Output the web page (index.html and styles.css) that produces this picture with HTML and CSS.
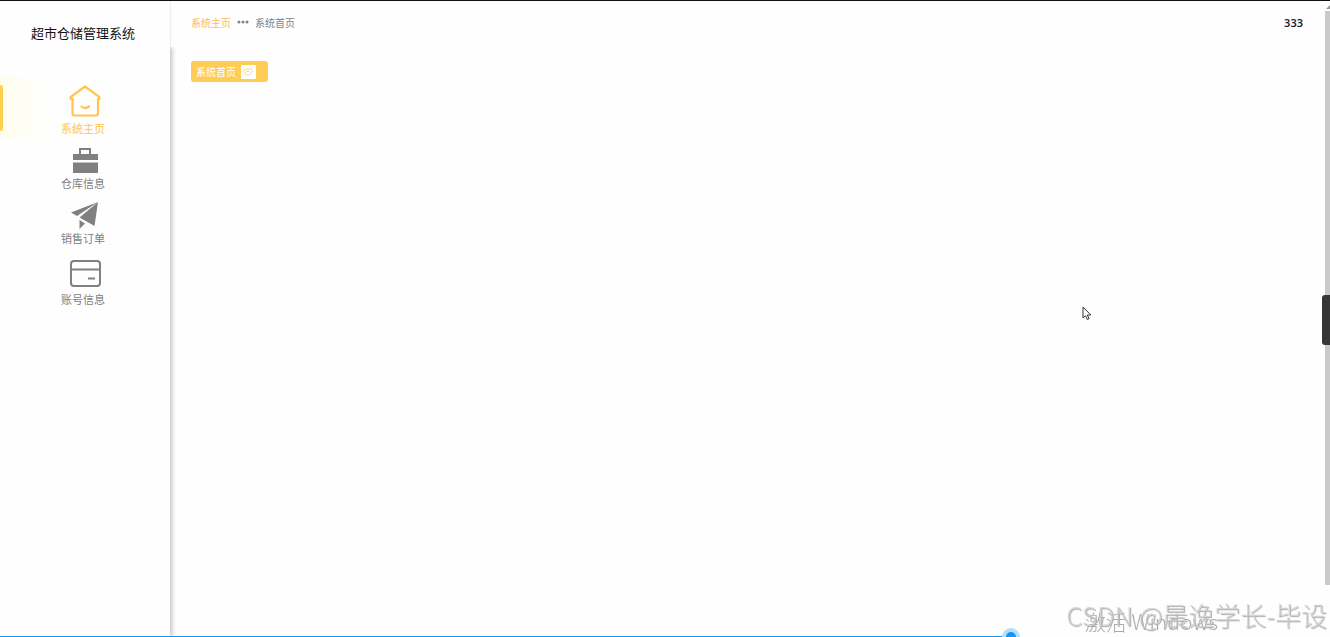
FILE: index.html
```html
<!DOCTYPE html>
<html lang="zh-CN">
  <head>
    <meta charset="utf-8" />
    <meta name="viewport" content="width=device-width, initial-scale=1" />
    <title>超市仓储管理系统</title>
    <link rel="stylesheet" href="styles.css">
  </head>
  <body>
    <aside class="sidebar">
      <h1 class="brand">超市仓储管理系统</h1>
      <nav class="menu">
        <a href="#" class="menu-item active">
          <svg class="menu-icon large" viewBox="0 0 32 32" fill="none" stroke="currentColor" stroke-width="2.2" stroke-linejoin="round" stroke-linecap="round">
            <path d="M3.5 13.8V28.5Q3.5 30.5 5.5 30.5H27Q29 30.5 29 28.5V13.8M1.5 14V12.2L16 1.5L30.5 12.2V14" />
            <path d="M12.5 21.5Q16 24.5 20 21.5" />
          </svg>
          <span class="menu-text">系统主页</span>
        </a>
        <a href="#" class="menu-item">
          <svg class="menu-icon" viewBox="0 0 28 28" fill="currentColor">
            <path d="M2 8H8V2H20V8H27V14H2ZM10 4V8H18V4ZM2 16.5H27V27H2Z" fill-rule="evenodd" />
          </svg>
          <span class="menu-text">仓库信息</span>
        </a>
        <a href="#" class="menu-item">
          <svg class="menu-icon" viewBox="0 0 28 28" fill="currentColor">
            <path d="M27 1L0 11.5L6 15Z" />
            <path d="M27 1L8.5 16.5L23.5 25Z" />
            <path d="M8.5 19L14 22.5L8.5 28Z" />
          </svg>
          <span class="menu-text">销售订单</span>
        </a>
        <a href="#" class="menu-item">
          <svg class="menu-icon large" viewBox="0 0 32 32" fill="none" stroke="currentColor" stroke-width="2">
            <rect x="2" y="5" width="29" height="25" rx="3" />
            <path d="M2 13.5H31M19 22.5H26" />
          </svg>
          <span class="menu-text">账号信息</span>
        </a>
      </nav>
    </aside>

    <main class="main">
      <header class="topbar">
        <div class="breadcrumb">
          <a href="#" class="crumb-home">系统主页</a>
          <svg class="crumb-dots" viewBox="0 0 12 4" fill="currentColor">
            <circle cx="2" cy="2" r="1.5" />
            <circle cx="6" cy="2" r="1.5" />
            <circle cx="10" cy="2" r="1.5" />
          </svg>
          <span>系统首页</span>
        </div>
        <span class="user">333</span>
      </header>
      <div class="tabs">
        <button type="button" class="tab">
          系统首页
          <span class="tab-icon">
            <svg viewBox="0 0 14 14" fill="none" stroke="currentColor" stroke-width="0.8" stroke-linejoin="round">
              <path d="M4.5 4H9.5L11.5 6.5L7 10.8L2.5 6.5ZM5.5 6.5H8.5" />
            </svg>
          </span>
        </button>
      </div>
    </main>

    <div class="scrollbar">
      <svg class="scroll-arrow" viewBox="0 0 5 5"><path d="M1 5L5 1V5Z" /></svg>
      <div class="scroll-thumb"></div>
    </div>
    <button type="button" class="drawer-handle" aria-label="展开"></button>

    <svg class="cursor" viewBox="0 0 10 15">
      <path d="M1 1V12L3.5 9.7L5.3 13.5L7 12.7L5.3 9H8.8Z" fill="#fff" stroke="#333" />
    </svg>

    <div class="activate">激活 Windows</div>
    <div class="watermark">CSDN @晨逸学长-毕设</div>

    <div class="player">
      <input type="range" class="player-range" min="0" max="1000" value="764" aria-label="播放进度" />
    </div>
  </body>
</html>
```
FILE: styles.css
```css
* {
  box-sizing: border-box;
}

body {
  display: flex;
  min-height: 100vh;
  margin: 0;
  border-top: 1px solid #111;
  background: #fefefe;
  color: #111;
  font-family: "Noto Sans CJK SC", "Noto Sans", sans-serif;
}

a {
  color: inherit;
  text-decoration: none;
}

.sidebar {
  display: flex;
  flex-direction: column;
  flex: none;
  width: 170px;
}

.brand {
  margin: 0;
  height: 46px;
  padding: 22px 4px 0 0;
  box-shadow: 1px 0 1px #eee;
  font-size: 13px;
  line-height: 20px;
  font-weight: 400;
  text-align: center;
}

.menu {
  flex: 1;
  padding-top: 30px;
  box-shadow: 2px 0 5px rgba(0, 0, 0, 0.24);
  clip-path: inset(0 -8px 0 0);
}

.menu-item {
  position: relative;
  display: flex;
  flex-direction: column;
  align-items: center;
  padding: 8px 0 1px;
  color: #808080;
}

.menu-item.active {
  color: #ffc54d;
  background: linear-gradient(to right, #fffdec, #fefefe 30%);
}

.menu-item.active:before {
  content: "";
  position: absolute;
  left: 0;
  top: 8px;
  bottom: 7px;
  width: 3px;
  border-radius: 0 3px 3px 0;
  background: #ffd050;
}

.menu-icon {
  width: 28px;
  height: 28px;
}

.menu-icon.large {
  width: 32px;
  height: 32px;
  margin-bottom: 2px;
}

.menu-text {
  padding-right: 4px;
  font-size: 11px;
  line-height: 18px;
}

.main {
  flex: 1;
  padding: 11px 22px 0 21px;
}

.topbar {
  display: flex;
  align-items: center;
  justify-content: space-between;
  height: 20px;
}

.breadcrumb {
  display: flex;
  align-items: center;
  gap: 6px;
  color: #7d858c;
  font-size: 10px;
}

.crumb-home {
  color: #ffc04a;
}

.crumb-dots {
  width: 12px;
  height: 4px;
}

.user {
  color: #1c222c;
  font-family: "Noto Sans", sans-serif;
  font-size: 11px;
  font-weight: 600;
}

.tabs {
  display: flex;
  padding-top: 29px;
}

.tab {
  display: flex;
  align-items: center;
  gap: 5px;
  height: 21px;
  padding: 0 12px 0 5px;
  border: 0;
  border-radius: 3px;
  background: #ffcc55;
  color: #fff;
  font-family: inherit;
  font-size: 10px;
}

.tab-icon {
  display: flex;
  width: 15px;
  height: 14px;
  border-radius: 1px;
  background: #fff;
  color: #ffcc55;
}

.scrollbar {
  display: flex;
  flex-direction: column;
  flex: none;
  width: 5px;
  padding: 3px 0 52px;
}

.scroll-arrow {
  height: 5px;
  margin-bottom: 2px;
  fill: #999;
}

.scroll-thumb {
  flex: 1;
  background: #c9c9c9;
}

.drawer-handle {
  position: fixed;
  right: 0;
  top: calc(50% - 24px);
  width: 8px;
  height: 50px;
  padding: 0;
  border: 0;
  border-radius: 3px 0 0 3px;
  background: #363636;
}

.cursor {
  position: fixed;
  left: 1082px;
  top: 306px;
  width: 10px;
  height: 15px;
}

.activate {
  position: fixed;
  right: 112px;
  bottom: 0;
  color: #aaa;
  font-size: 21px;
  line-height: 32px;
  font-weight: 300;
}

.watermark {
  position: fixed;
  right: 3px;
  bottom: 2px;
  color: rgba(208, 208, 208, 0.8);
  font-size: 26px;
  line-height: 40px;
  font-weight: 300;
  text-shadow: 1px 1px 1px #aaa;
}

.player {
  position: fixed;
  left: 0;
  right: 0;
  bottom: 0;
  height: 9px;
  overflow: hidden;
}

.player-range {
  display: block;
  width: 100%;
  height: 18px;
  margin: 0;
  appearance: none;
  background: linear-gradient(to right, #1296f5 76%, transparent 76%) 0 8px / 100% 1px no-repeat;
}

.player-range::-webkit-slider-thumb {
  width: 18px;
  height: 18px;
  border: 4px solid #b5defc;
  border-radius: 50%;
  appearance: none;
  background: #1296f5;
}
```
